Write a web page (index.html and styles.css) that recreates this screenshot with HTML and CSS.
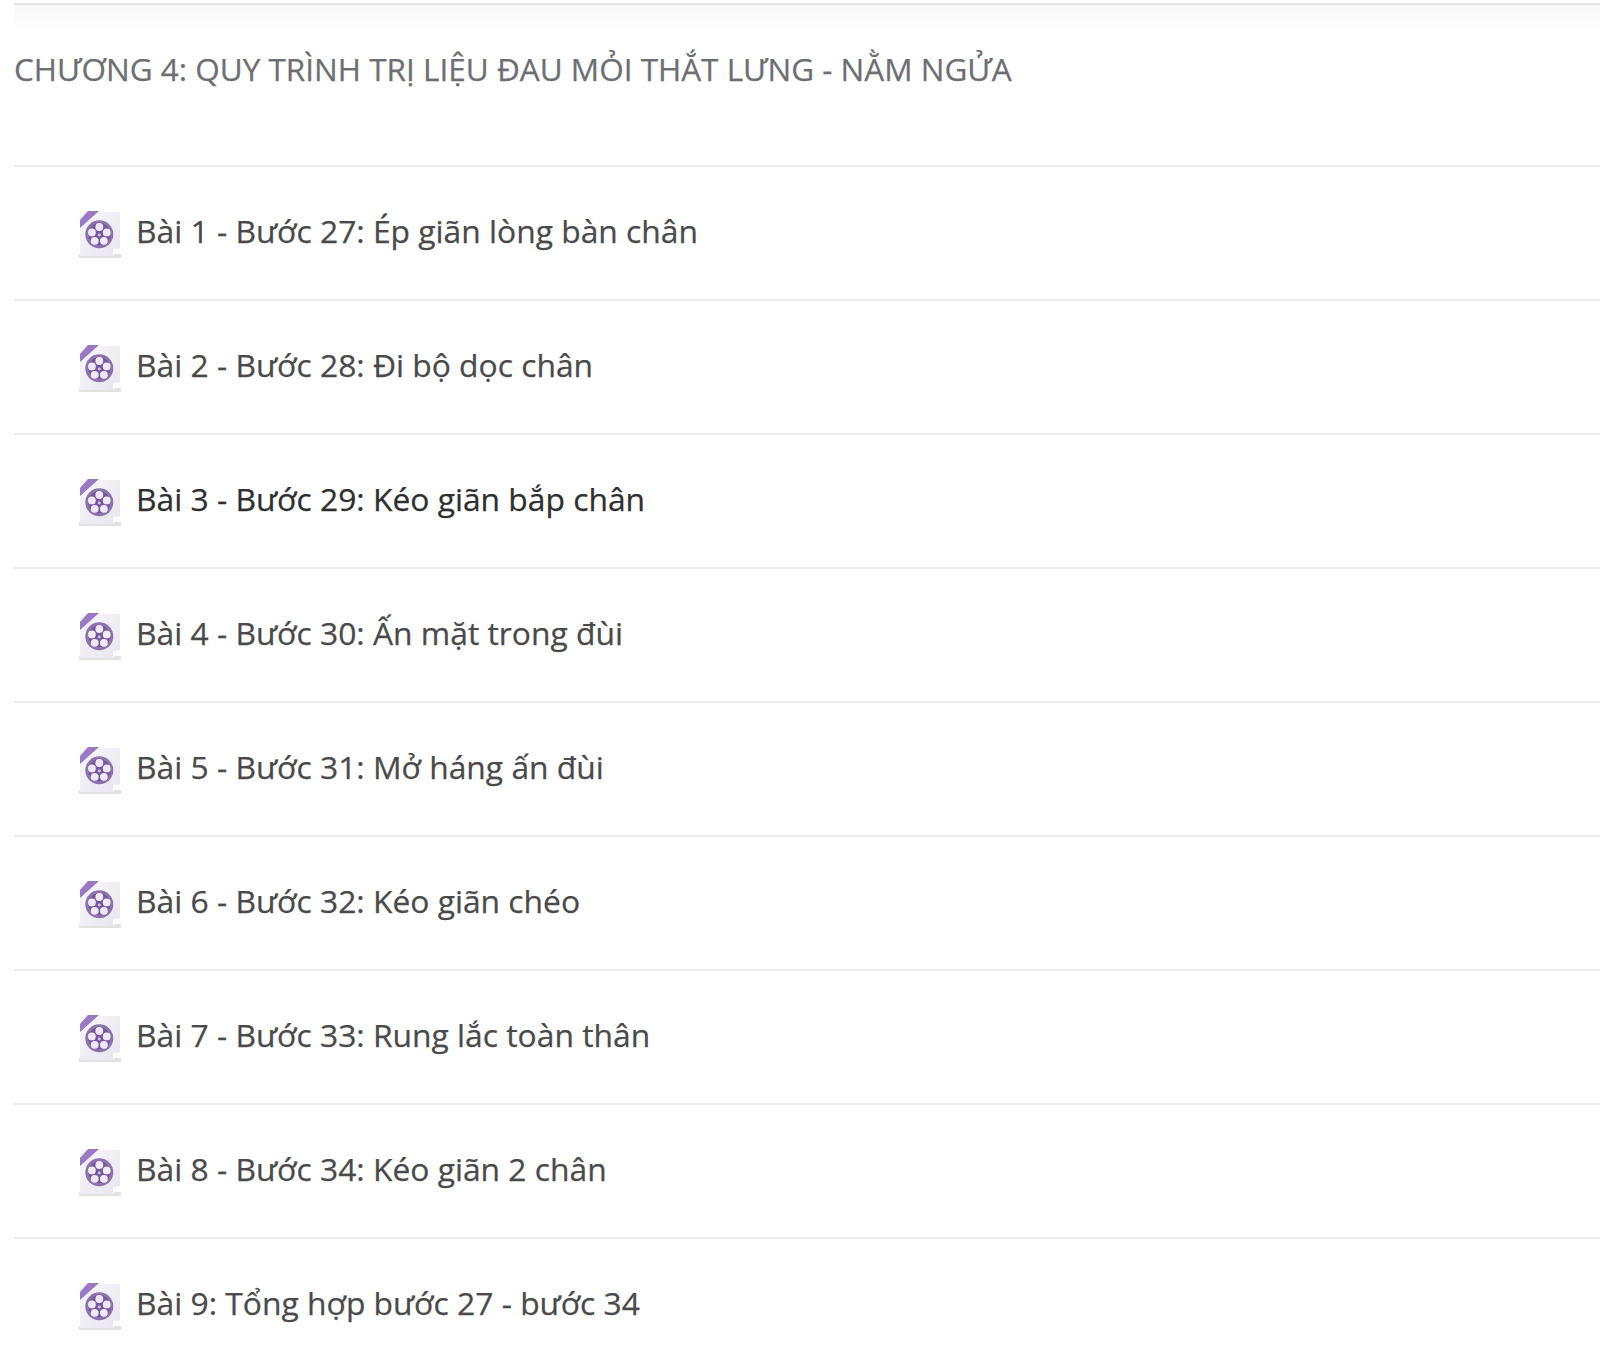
FILE: index.html
```html
<!DOCTYPE html>
<html lang="vi">
<head>
<meta charset="utf-8">
<title>Chương 4</title>
<link rel="stylesheet" href="styles.css">
</head>
<body>
<svg class="defs" width="0" height="0" aria-hidden="true">
  <defs>
    <linearGradient id="paper" x1="0" y1="0" x2="1" y2="1">
      <stop offset="0" stop-color="#f8f7fb"/>
      <stop offset="1" stop-color="#e8e5ee"/>
    </linearGradient>
    <symbol id="film" viewBox="0 0 44 48">
      <rect x="2" y="44" width="42" height="4" fill="#e2e2e2"/>
      <path d="M3 2H43V38L36 46H3Z" fill="url(#paper)"/>
      <path d="M43 38L36 46V39Z" fill="#fbfbfb"/>
      <path d="M3 18V10L11 1H22Z" fill="#9a78c2"/>
      <circle cx="22.300" cy="24.300" r="14" fill="#8c74aa"/>
      <circle cx="22.300" cy="24.300" r="11" fill="#77589c"/>
      <circle cx="22.300" cy="17" r="3.900" fill="#efeaf5"/>
      <circle cx="29.700" cy="22.400" r="3.900" fill="#efeaf5"/>
      <circle cx="26.900" cy="30.800" r="3.900" fill="#efeaf5"/>
      <circle cx="17.700" cy="30.800" r="3.900" fill="#efeaf5"/>
      <circle cx="14.900" cy="22.400" r="3.900" fill="#efeaf5"/>
      <circle cx="22.300" cy="25" r="1.400" fill="#d9d0e4"/>
    </symbol>
  </defs>
</svg>
<main class="chapter">
  <h2 class="chapter-title">CHƯƠNG 4: QUY TRÌNH TRỊ LIỆU ĐAU MỎI THẮT LƯNG - NẰM NGỬA</h2>
  <ul class="lessons">
    <li class="lesson"><svg class="icon"><use href="#film"/></svg><span class="lesson-name">Bài 1 - Bước 27: Ép giãn lòng bàn chân</span></li>
    <li class="lesson"><svg class="icon"><use href="#film"/></svg><span class="lesson-name">Bài 2 - Bước 28: Đi bộ dọc chân</span></li>
    <li class="lesson lesson-active"><svg class="icon"><use href="#film"/></svg><span class="lesson-name">Bài 3 - Bước 29: Kéo giãn bắp chân</span></li>
    <li class="lesson"><svg class="icon"><use href="#film"/></svg><span class="lesson-name">Bài 4 - Bước 30: Ấn mặt trong đùi</span></li>
    <li class="lesson"><svg class="icon"><use href="#film"/></svg><span class="lesson-name">Bài 5 - Bước 31: Mở háng ấn đùi</span></li>
    <li class="lesson"><svg class="icon"><use href="#film"/></svg><span class="lesson-name">Bài 6 - Bước 32: Kéo giãn chéo</span></li>
    <li class="lesson"><svg class="icon"><use href="#film"/></svg><span class="lesson-name">Bài 7 - Bước 33: Rung lắc toàn thân</span></li>
    <li class="lesson"><svg class="icon"><use href="#film"/></svg><span class="lesson-name">Bài 8 - Bước 34: Kéo giãn 2 chân</span></li>
    <li class="lesson"><svg class="icon"><use href="#film"/></svg><span class="lesson-name">Bài 9: Tổng hợp bước 27 - bước 34</span></li>
  </ul>
</main>
</body>
</html>
```
FILE: styles.css
```css
* { box-sizing: border-box; }
html, body { margin: 0; padding: 0; height: 100%; overflow: hidden; background: #fff; }
body { font-family: "Open Sans", "Noto Sans", sans-serif; }
.defs { position: absolute; }
.chapter {
  margin: 3px 0 0 14px;
  border-top: 2px solid #e6e6e6;
  background: linear-gradient(#f8f8f8, #fff 32px);
  background-repeat: no-repeat;
}
.chapter-title {
  margin: 0;
  height: 160px;
  padding-top: 44px;
  font-size: 31.5px;
  line-height: 40px;
  font-weight: 400;
  color: #6d6e71;
  -webkit-text-stroke: 0.25px #6d6e71;
}
.lessons { list-style: none; margin: 0; padding: 0; }
.lesson {
  height: 134px;
  border-top: 2px solid #ececec;
  display: flex;
  align-items: center;
  padding-left: 63px;
  font-size: 31.8px;
  color: #4a4a4a;
}
.lesson-name { margin-bottom: 5px; -webkit-text-stroke: 0.25px currentColor; }
.lesson-active { color: #2f2f2f; }
.icon { width: 44px; height: 48px; margin: 2px 15px 0 0; flex: none; filter: blur(0.7px); }
```
